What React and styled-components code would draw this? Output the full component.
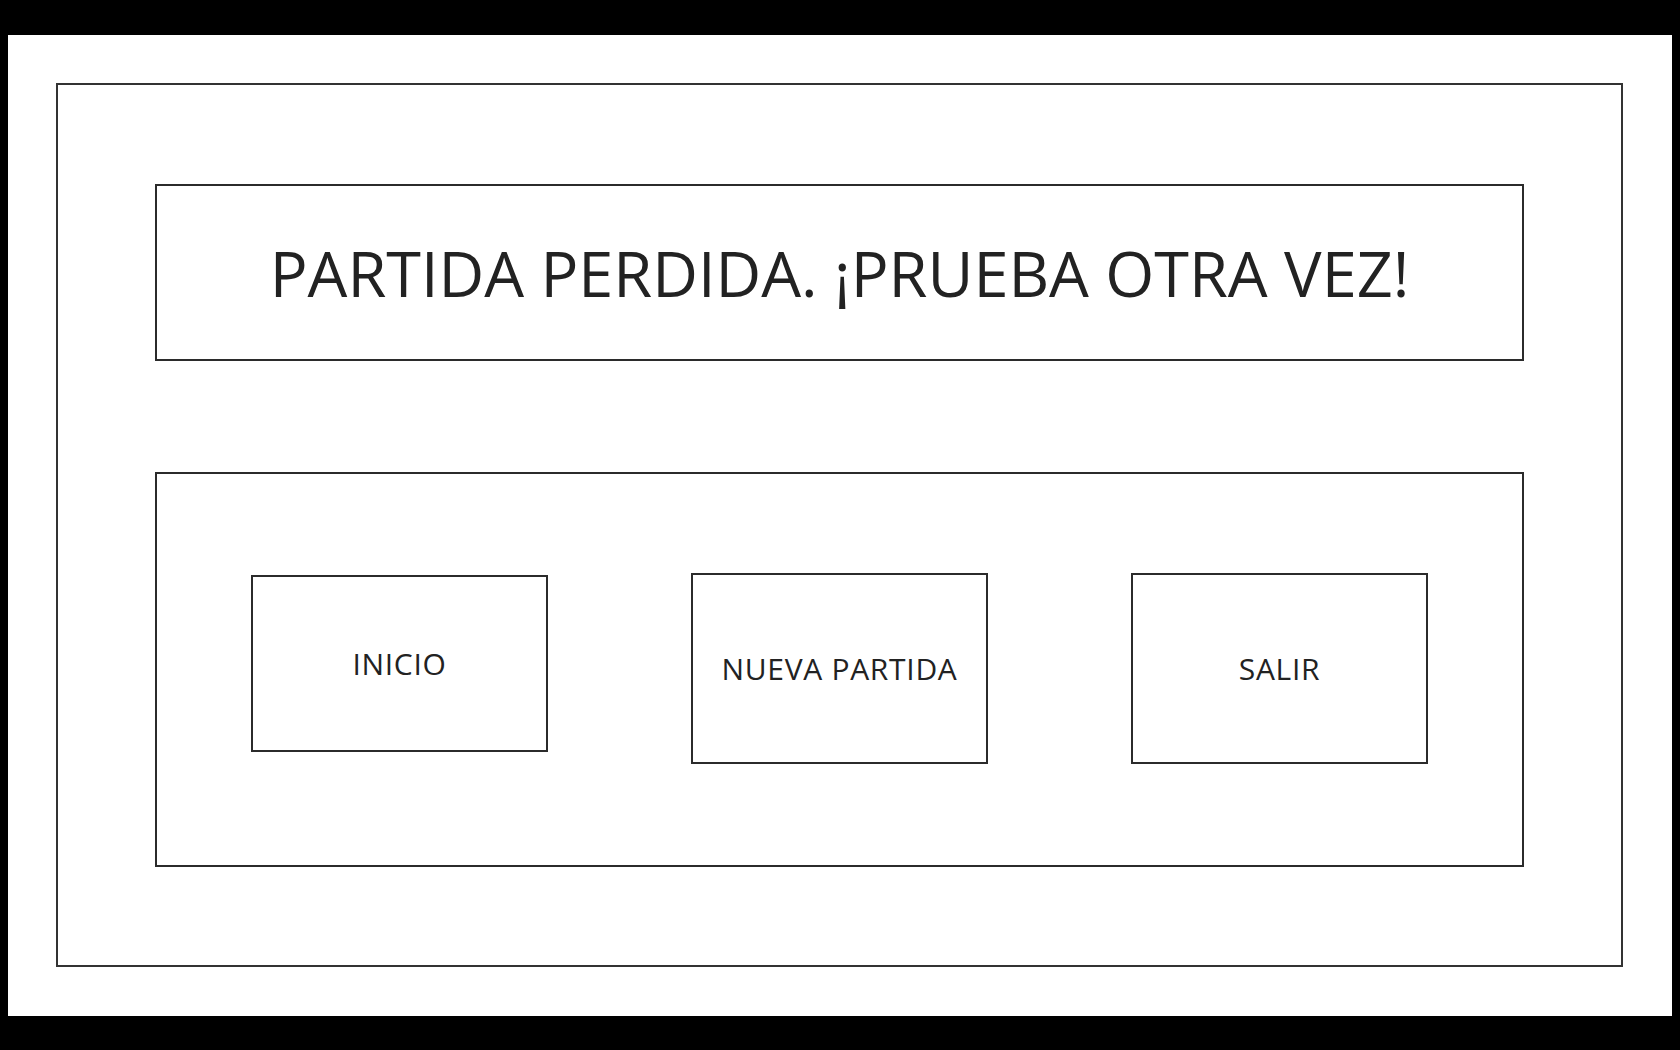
import React from "react";
import styled, { createGlobalStyle } from "styled-components";

const GlobalStyle = createGlobalStyle`
  html, body {
    margin: 0;
    padding: 0;
    background: #000;
  }
  * {
    box-sizing: border-box;
  }
`;

const Page = styled.div`
  min-height: 100vh;
  display: flex;
  align-items: center;
  padding-inline: 8px;
  font-family: "Open Sans", "Noto Sans", sans-serif;
  color: #222;
`;

const Screen = styled.main`
  flex: 1;
  height: 981px;
  background: #fff;
  padding: 48px 48px 49px 48px;
`;

const Frame = styled.section`
  width: 1567px;
  height: 884px;
  border: 2px solid #333;
  padding: 99px 97px 98px;
  display: flex;
  flex-direction: column;
  gap: 111px;
`;

const TitleBox = styled.header`
  height: 177px;
  border: 2px solid #2b2b2b;
  display: flex;
  align-items: center;
  justify-content: center;

  h1 {
    margin: 0;
    font-size: 63px;
    font-weight: 400;
    line-height: 1;
  }
`;

const Panel = styled.nav`
  height: 395px;
  border: 2px solid #2b2b2b;
  padding: 99px 93px 0 94px;
  display: flex;
  align-items: flex-start;
  gap: 143px;
`;

const MenuButton = styled.button`
  width: 297px;
  height: ${(p) => p.$height}px;
  margin-top: ${(p) => p.$offset || 0}px;
  border: 2px solid #2b2b2b;
  background: #fff;
  display: flex;
  align-items: center;
  justify-content: center;
  padding: 0;
  font-family: inherit;
  font-size: 30px;
  font-weight: 400;
  letter-spacing: 0.7px;
  color: #222;
  cursor: pointer;
`;

export default function App() {
  return (
    <>
      <GlobalStyle />
      <Page>
        <Screen>
          <Frame>
            <TitleBox>
              <h1>PARTIDA PERDIDA. ¡PRUEBA OTRA VEZ!</h1>
            </TitleBox>
            <Panel>
              <MenuButton $height={177} $offset={2}>INICIO</MenuButton>
              <MenuButton $height={191}>NUEVA PARTIDA</MenuButton>
              <MenuButton $height={191}>SALIR</MenuButton>
            </Panel>
          </Frame>
        </Screen>
      </Page>
    </>
  );
}
